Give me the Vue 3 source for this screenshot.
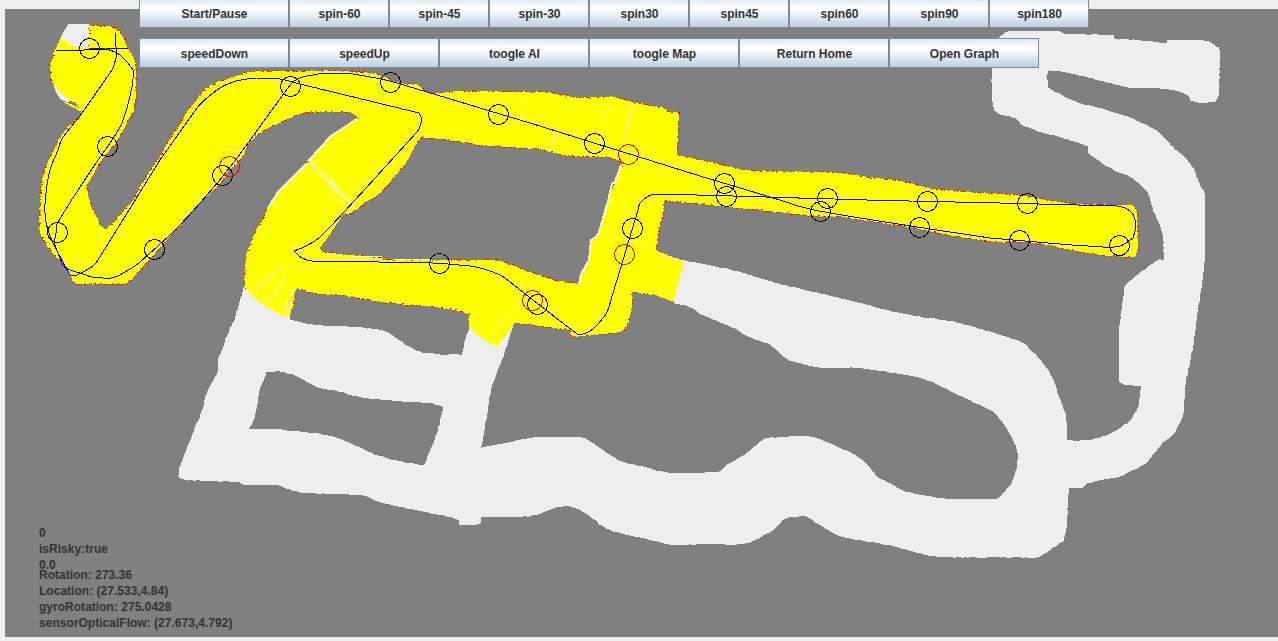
<script setup>
const topButtons = ['Start/Pause', 'spin-60', 'spin-45', 'spin-30', 'spin30', 'spin45', 'spin60', 'spin90', 'spin180']
const lowerButtons = ['speedDown', 'speedUp', 'toogle AI', 'toogle Map', 'Return Home', 'Open Graph']
const status = ['0', 'isRisky:true', '0.0']
const telemetry = ['Rotation: 273.36', 'Location: (27.533,4.84)', 'gyroRotation: 275.0428', 'sensorOpticalFlow: (27.673,4.792)']

const parse = (s) => s.trim().split(/\s+/).map((p) => p.split(',').map(Number))

let seed = 7
const rnd = () => {
  seed = (seed * 16807) % 2147483647
  return seed / 2147483647
}

// Unit tangent at point b, leaning to the longer neighbour so that straight
// runs stay straight; null where the outline turns sharply
function tangent(a, b, c) {
  const l1 = Math.hypot(b[0] - a[0], b[1] - a[1])
  const l2 = Math.hypot(c[0] - b[0], c[1] - b[1])
  const u = [(b[0] - a[0]) / l1, (b[1] - a[1]) / l1]
  const v = [(c[0] - b[0]) / l2, (c[1] - b[1]) / l2]
  if (u[0] * v[0] + u[1] * v[1] < 0.8) return null
  const w1 = l1 ** 3
  const w2 = l2 ** 3
  const t = [u[0] * w1 + v[0] * w2, u[1] * w1 + v[1] * w2]
  const l = Math.hypot(t[0], t[1])
  return [t[0] / l, t[1] / l]
}

// Samples a curve through the points every `step` pixels, keeping corners sharp
function curve(points, step, closed) {
  const n = points.length
  const at = (i) => points[(i + n) % n]
  const tan = points.map((p, i) => (!closed && (i === 0 || i === n - 1) ? null : tangent(at(i - 1), p, at(i + 1))))
  const out = []
  for (let i = 0; i < (closed ? n : n - 1); i++) {
    const p = at(i)
    const q = at(i + 1)
    const len = Math.hypot(q[0] - p[0], q[1] - p[1])
    const dir = [(q[0] - p[0]) / len, (q[1] - p[1]) / len]
    const straight = len > 55
    const a = (!straight && tan[i]) || dir
    const b = (!straight && tan[(i + 1) % n]) || dir
    const m = Math.max(1, Math.round(len / step))
    for (let k = 0; k < m; k++) {
      const t = k / m
      const h = [2 * t ** 3 - 3 * t ** 2 + 1, t ** 3 - 2 * t ** 2 + t, -2 * t ** 3 + 3 * t ** 2, t ** 3 - t ** 2]
      out.push([0, 1].map((d) => h[0] * p[d] + h[1] * len * a[d] + h[2] * q[d] + h[3] * len * b[d]))
    }
  }
  if (!closed) out.push(points[n - 1])
  return out
}

// Roughens a closed outline like a scanned wall
function rough(points, amount, step) {
  return curve(points, step, true).map(([x, y]) => [x + (rnd() - 0.5) * amount, y + (rnd() - 0.5) * amount])
}
const toPath = (pts) => 'M' + pts.map((p) => p[0].toFixed(1) + ' ' + p[1].toFixed(1)).join('L') + 'Z'

const corridor = parse(`246,280 240,300 234,320 228,333 222,350 218,360 217,373 208,390 202,410 193,433 185,453 179,470 179,478 185,480
237,482 245,485 278,485 287,489 305,493 360,495 380,502 410,509 450,517 459,521 459,525 477,525 481,523 481,517 520,517 540,514
557,507 572,507 588,515 607,529 633,536 663,543 678,545 710,544 743,544 770,532 785,519 797,517 807,517 823,527 843,537 887,545
923,554 950,557.5 1035,557.5 1053,548 1063,541 1067,527 1068,503 1069,488 1083,488 1088,483 1118,477 1133,470 1147,462 1163,443
1175,432 1183,414 1186,383 1193,347 1198,310 1203,277 1205,250 1205,197 1199,182 1190,163 1173,147 1157,131 1133,119 1103,109
1077,102 1048,88 1048,80 1046,77 1049,70 1070,73 1125,87 1153,88 1177,91 1189,96 1190,100 1200,103 1215,102 1219,95 1220,57
1219,48 1210,42 1202,40 1167,40 1167,43 1137,40 1115,39 1114,35 1065,34 1060,31 1009,31 1001,36 992,50 992,97 994,110 1002,115
1015,118 1022,125 1043,133 1060,137 1088,146 1088,153 1110,168 1132,178 1147,192 1153,210 1162,233 1164,260 1157,260 1133,278
1125,285 1121,313 1119,333 1119,382 1127,385 1141,386 1139,403 1135,413 1127,423 1107,435 1087,440 1067,440 1066,417 1058,393
1052,377 1043,363 1027,346 1013,339 980,329 950,321 922,317 890,311 853,301 780,284 740,272 713,266 683,260 657,253 640,280
673,302 690,307 703,315 733,328 747,336 770,345 787,359 803,364 827,368 860,368 900,374 927,380 958,395 990,410 1002,422
1013,440 1018,457 1013,480 1002,495 993,499 950,499 928,496 905,491 887,482 878,477 860,458 840,448 812,437 783,437 768,438
758,443 747,453 727,465 717,472 673,473 640,466 617,459 593,443 580,437 540,437 520,440 493,445 481,448 483,440 487,415
492,387 503,357 513,327 510,318 470,314 469,328 466,337 462,355 435,354 415,350 387,332 373,329 353,327 317,325 290,320 290,305`)
const island = parse(`267,372 282,372 300,378 317,387 337,391 360,397 405,402 430,403 443,407 438,430 433,443 424,465 403,462 377,455
352,444 335,437 313,433 293,431 275,429 249,429 255,417 260,390`)

const scanned = parse(`89,25 112,27 122,35 128,48 136,63 135,107 130,117 118,140 108,152 100,163 86,187 92,207 100,225 106,229 120,215
133,200 143,182 160,156 167,143 180,123 190,108 208,87 233,77 255,71.5 330,70.5 373,73 393,81 417,85 430,93 463,91 540,92
577,97 612,97 633,102 663,108 667,111 679,112 678,133 677,155 710,162 730,167 757,171 827,172 867,177 900,181 930,188 957,191
1017,195 1067,203 1113,205 1133,205 1137,210 1138,247 1135,257 1100,255 1067,249 1027,242 1000,242 960,237 913,228 860,220
840,217 810,216 767,211 727,207 700,204 664,201 663,213 659,230 656,250 684,262 674,302 653,295 632,292 632,307 627,327
620,332 572,337 570,330 540,326 515,323 497,347 480,337 469,327 469,314 443,308 390,303 357,298 343,295 320,294 297,289
295,293 294,303 290,315 285,317 263,305 245,288 245,262 253,237 262,220 277,193 307,163 330,137 357,120 359,118 347,112
313,112 290,118 257,135 240,160 230,170 217,187 200,203 167,240 147,262 133,278 123,284 75,284 65,267 42,238 40,210 42,180
50,158 63,133 81,115 78,109 72,102 55,87 50,67 55,50 61,38 75,47 89,48`)
const room = parse(`480,145 537,149 570,156 607,157 622,162 615,183 608,200 598,233 590,240 588,260 580,277 578,284 547,278 500,261
480,260 393,260 380,258 322,252 320,248 333,230 343,214 352,213 366,202 380,193 403,167 417,143 422,137 440,139 473,144`)

const corridorPath = toPath(rough(corridor, 0.9, 3)) + toPath(rough(island, 0.9, 3))
const scanOutline = rough(scanned, 1.4, 1.8)
const roomOutline = rough(room, 1.1, 1.8)
const scanPath = toPath(scanOutline) + toPath(roomOutline)

// Areas where the scan ends without a wall: [x1, y1, x2, y2]
const open = [
  [50, 25, 88, 52], [55, 88, 80, 114], [243, 289, 292, 320], [468, 316, 513, 350],
  [654, 252, 686, 305], [580, 164, 621, 282], [632, 292, 672, 301], [278, 122, 355, 192],
]
const wallHits = scanOutline.concat(roomOutline)
  .filter(([x, y]) => !open.some((o) => x >= o[0] && x <= o[2] && y >= o[1] && y <= o[3]))
  .filter(() => rnd() < 0.5)
  .map(([x, y]) => {
    const w = rnd() < 0.3 ? 2 : 1
    return `M${Math.round(x - 0.4)} ${Math.round(y - 0.4)}h${w}v1h-${w}z`
  })
  .join('')

const route = curve(parse(`89,48 105,49 117,53 126,61 133,70 133,79 132,87 127,108 120,127 108,146 103,153 80,187 58,222 56,233 55,245 63,265
70,270 80,273 92,277 103,278 111,278 120,275 140,262 177,228 213,188 243,150 290,85 300,78 313,75 327,73 353,74 397,83 530,123
700,176 767,196 810,209 860,218 917,227 990,238 1060,244 1103,247 1120,246 1133,238 1136,227 1135,220 1132,213 1125,208
1117,206 1000,203 867,200 733,196 700,195 653,194.5 647,197 640,203 638,210 623,260 613,293 607,312 597,325 590,331 583,334
577,334 533,300 505,278 493,272 480,268 470,266 433,263 382,262 312,261 302,258 297,254 294,251 306,246 320,237 345,211
417,132 421,123 421,117 419,113 300,84 280,79 260,78 247,79 233,82 217,90 197,108 160,160 98,260 90,268 75,276 70,275
55,247 48,230 45,213 46,193 50,170 58,150 63,137 82,113 112,70 116,58 117,55`), 3, false)
  .map((p) => p[0].toFixed(1) + ',' + p[1].toFixed(1))
  .join(' ')

const checkpoints = [
  [89, 48], [107, 146], [57, 232], [154, 249], [222, 175], [290, 86], [390, 82], [498, 114], [594, 143], [724, 183],
  [820, 211], [919, 227], [1019, 240], [1119, 245], [1027, 203], [927, 201], [827, 198], [726, 196], [632, 228],
  [537, 304], [439, 263],
]
const risks = [[229, 166], [628, 154], [624, 254], [532, 300]]
</script>

<template>
  <main class="window">
    <svg class="map" viewBox="0 0 1278 641" width="1278" height="641">
      <rect x="5" y="9" width="1273" height="628" fill="#808080" />
      <path :d="corridorPath" fill="#eee" fill-rule="evenodd" />
      <path d="M68 24H89V49H76L60 39L62 35ZM51 78L56 92L60 99L67 102L74 103L78 109L72 90Z" fill="#eee" />
      <path :d="scanPath" fill="#ff0" fill-rule="evenodd" />
      <path d="M64 102L79 110M64 102L77 107" class="beam" />
      <path d="M68 101L75 102L79 108Z" fill="#808080" />
      <path :d="wallHits" fill="#f00" />
      <g class="gap">
        <path d="M308 160L318 170M310 159L355 209M309 163L352 205M329 178L350 203M334 195L344 205" />
        <path d="M252 293L283 266M265 306L286 277M283 315L293 288M287 315L292 299" />
        <path d="M387.500 262V272M556 133L551 151M634 103L623 141M1116.500 247V250" />
        <path class="thick" d="M621 165L615 182L612 184L608 201L599 232L596 237L591 240L589 260L581 274L579 284" />
        <path class="thick" d="M357 119L331 136L308 161M306 164L278 192L268 208" />
        <path d="M393 259.500H432M328 253L343 255M350 256L382 257" />
        <path d="M657 254L682 261" />
        <path class="dots" d="M518 300L487 340M527 93L520 117M612 98L600 142M632 241L655 248M620 278L674 294M622 319L627 321" />
      </g>
      <polyline :points="route" class="route" />
      <path d="M56 51L84 50L128 48M115.500 33V42L117 57" class="axis" />
      <circle v-for="(p, i) in checkpoints" :key="'c' + i" :cx="p[0] + 0.5" :cy="p[1] + 0.5" r="10" class="checkpoint" />
      <circle v-for="(p, i) in risks" :key="'r' + i" :cx="p[0] + 0.5" :cy="p[1] + 0.5" r="10" class="checkpoint risk" />
    </svg>
    <div class="controls">
      <div class="row">
        <button v-for="(b, i) in topButtons" :key="b" :class="{ wide: i === 0 }">{{ b }}</button>
      </div>
      <div class="row">
        <button v-for="b in lowerButtons" :key="b" class="wide">{{ b }}</button>
      </div>
    </div>
    <div class="readout">
      <div class="group">
        <div v-for="s in status" :key="s">{{ s }}</div>
      </div>
      <div class="group second">
        <div v-for="t in telemetry" :key="t">{{ t }}</div>
      </div>
    </div>
  </main>
</template>

<style>
body {
  background: #eee;
  overflow: hidden;
}
</style>

<style scoped>
.window {
  display: grid;
  width: 1278px;
  height: 641px;
  overflow: hidden;
  background: #eee;
  color: #333;
  font: bold 12px "Liberation Sans", Arial, sans-serif;
}
.map,
.controls,
.readout {
  grid-area: 1 / 1;
}
.map {
  display: block;
  shape-rendering: crispEdges;
}
.route,
.axis,
.checkpoint,
.gap,
.beam {
  fill: none;
  stroke-width: 1;
}
.route {
  stroke: #00f;
}
.axis,
.checkpoint {
  stroke: #000;
}
.risk {
  stroke: #f00;
}
.gap {
  stroke: #eee;
}
.beam {
  stroke: #ff0;
}
.thick {
  stroke-width: 2;
}
.dots {
  stroke-dasharray: 1.4 2.6;
}
.controls {
  align-self: start;
  margin: -2px 0 0 139px;
  display: flex;
  flex-direction: column;
  gap: 10px;
}
.row {
  display: flex;
}
button {
  box-sizing: border-box;
  width: 100px;
  height: 30px;
  padding: 2px 0 0 1px;
  border: 1px solid #7a8a99;
  border-radius: 0;
  background: linear-gradient(#dde8f3 0%, #fff 32%, #fff 38%, #b8cfe5 100%);
  color: #333;
  font: inherit;
}
button.wide {
  width: 150px;
}
.readout {
  align-self: end;
  padding: 0 0 10px 39px;
  line-height: 16px;
  letter-spacing: 0.02px;
}
.second {
  margin-top: -6px;
}
</style>
